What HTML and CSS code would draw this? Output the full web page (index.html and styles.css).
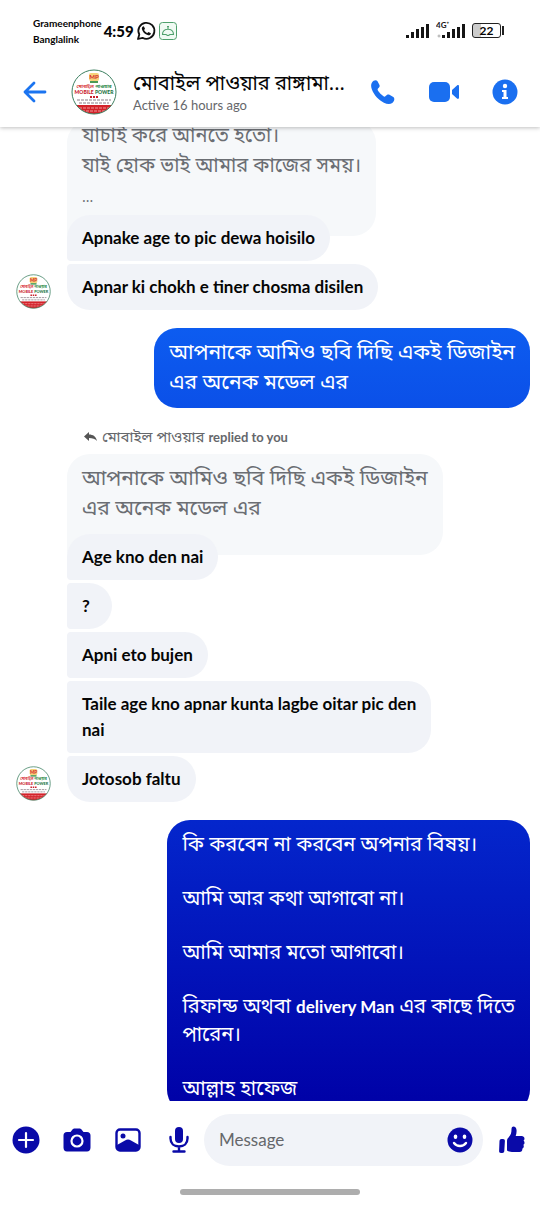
FILE: index.html
```html
<!DOCTYPE html>
<html lang="bn">
<head>
    <meta charset="UTF-8">
    <meta name="viewport" content="width=device-width, initial-scale=1.0">
    <title>Messenger</title>
    <link rel="stylesheet" href="styles.css">
</head>
<body>
    <div class="app">
        <div class="status-bar">
            <div class="carriers">
                <span>Grameenphone</span>
                <span>Banglalink</span>
            </div>
            <span class="clock">4:59</span>
            <svg class="status-icon" viewBox="0 0 20 20" fill="none">
                <path d="M2 18l1.300-4.500A8 8 0 1 1 6.500 16.800z" stroke="#111" stroke-width="1.800" stroke-linejoin="round"/>
                <path d="M6.600 5.700l1.200-.4 1.200 2.500-.9 1.200c.7 1.500 1.700 2.400 3.200 3.100l1.200-1 2.400 1.200c0 1.500-1.400 2.300-2.700 2-3.400-.8-5.700-3.200-6.300-6.200-.2-1 .1-1.900.7-2.400z" fill="#111"/>
            </svg>
            <svg class="status-icon" viewBox="0 0 20 20" fill="none" stroke="#4fa06c">
                <rect x="1.500" y="1.500" width="17" height="17" rx="3" fill="#f0faf3"/>
                <path d="M4.500 13.500c0-7 11-7 11 0M4 13.500h4l1.500 1h1l1.500-1h4M10 8V5.500M9 5.500h2" stroke-width="1.200"/>
            </svg>
            <div class="signals">
                <svg width="24" height="22" viewBox="0 0 24 22" fill="#151515">
                    <path d="M0 15h3v3H0zM5 12h3v6H5zM10 9h3v9h-3zM15 7h3v11h-3zM20 4h3v14h-3z"/>
                </svg>
                <svg width="30" height="22" viewBox="0 0 30 22" fill="#151515">
                    <text x="0" y="8" font-size="8" font-weight="700">4G⁺</text>
                    <circle cx="3" cy="16" r="1" fill="none" stroke="#aaa"/>
                    <path d="M6 15h3v3H6zM11 12h3v6h-3zM16 9h3v9h-3zM21 7h3v11h-3zM26 4h3v14h-3z"/>
                </svg>
                <div class="battery"><span>22</span></div>
            </div>
        </div>

        <header class="chat-header">
            <button type="button" class="icon-btn" aria-label="Back">
                <svg width="24" height="22" viewBox="0 0 24 22" fill="none" stroke="#1b74f0" stroke-width="2.800" stroke-linecap="round" stroke-linejoin="round">
                    <path d="M11 2L2 11l9 9M2 11h20"/>
                </svg>
            </button>
            <svg class="header-avatar" viewBox="0 0 46 46">
                <!-- shop logo, reused next to the messages -->
                <g id="shop-logo">
                    <clipPath id="logo-clip"><circle cx="23" cy="23" r="22"/></clipPath>
                    <circle cx="23" cy="23" r="22" fill="#fff"/>
                    <g clip-path="url(#logo-clip)">
                        <rect x="0" y="36" width="46" height="10" fill="#d3222a"/>
                        <path d="M8 39h30M11 42h24" stroke="#f0989a" stroke-dasharray="3 1"/>
                    </g>
                    <circle cx="23" cy="23" r="22" fill="none" stroke="#3c8060"/>
                    <rect x="18" y="4" width="10" height="8" rx="2" fill="#f6d27a"/>
                    <text x="23" y="10" text-anchor="middle" font-size="6" font-weight="700" fill="#d3222a">MP</text>
                    <path d="M19 13h8" stroke="#4c9a55" stroke-width="2"/>
                    <text x="23" y="19" text-anchor="middle" font-size="5" font-weight="700" fill="#d8383c">মোবাইল <tspan fill="#2f8a4b">পাওয়ার</tspan></text>
                    <text x="23" y="25" text-anchor="middle" font-size="5" font-weight="900" fill="#c8202b">MOBILE <tspan fill="#23733f">POWER</tspan></text>
                    <path d="M19 28h9" stroke="#c8202b" stroke-width="2" stroke-dasharray="2 1"/>
                    <path d="M6 31h34M8 34h30" stroke="#8c7d86" stroke-dasharray="3 1"/>
                </g>
            </svg>
            <div class="contact">
                <h1>মোবাইল পাওয়ার রাঙ্গামা...</h1>
                <p>Active 16 hours ago</p>
            </div>
            <div class="header-actions">
                <button type="button" class="icon-btn" aria-label="Call">
                    <svg width="26" height="26" viewBox="0 0 26 26" fill="#1a6ff0">
                        <path d="M2 3.500C3.500 1 6.300.6 7.500 2.200l2 3.800c.6 1.500-.4 2.500-1.500 3.500-.6.700-.4 1.500.2 2.500 1.300 2 3 3.700 5 5.100 1 .7 1.700.7 2.400 0 1.200-1.400 2.400-2 3.900-1.300l3.800 2.300c1.800 1.400 1.100 4.400-1 5.900-2.300 1.500-5.400 1.200-8.400-.3C8.500 21 4 16 2 10.800 1 8 .7 5.500 2 3.500z"/>
                    </svg>
                </button>
                <button type="button" class="icon-btn" aria-label="Video call">
                    <svg width="30" height="20" viewBox="0 0 30 20" fill="#1a6ff0">
                        <rect x="0" y="0" width="21" height="20" rx="5"/>
                        <path d="M23 8l5-4.500c1-.8 2-.3 2 1v11c0 1.300-1 1.800-2 1L23 12z"/>
                    </svg>
                </button>
                <button type="button" class="icon-btn" aria-label="Details">
                    <svg width="26" height="26" viewBox="0 0 26 26">
                        <circle cx="13" cy="13" r="12.500" fill="#1a6ff0"/>
                        <circle cx="13" cy="7" r="2.200" fill="#fff"/>
                        <path d="M10 11h4.500v7H16v2h-6v-2h1.500v-5H10z" fill="#fff"/>
                    </svg>
                </button>
            </div>
        </header>

        <main class="thread">
            <div class="quote quote-cut">যাচাই করে আনতে হতো।<br>যাই হোক ভাই আমার কাজের সময়।<br><small>...</small></div>
            <div class="bubble received over-quote">Apnake age to pic dewa hoisilo</div>
            <div class="with-avatar">
                <svg class="small-avatar" viewBox="0 0 46 46"><use href="#shop-logo"/></svg>
                <div class="bubble received last">Apnar ki chokh e tiner chosma disilen</div>
            </div>

            <div class="bubble sent">আপনাকে আমিও ছবি দিছি একই ডিজাইন<br>এর অনেক মডেল এর</div>

            <p class="reply-label">
                <svg width="13" height="10" viewBox="0 0 13 10" fill="#555"><path d="M5 0v2.500c4 0 7 2 8 6.500-2-2.300-4.500-3-8-3V9L0 4.500z"/></svg>
                <span>মোবাইল পাওয়ার <b>replied to you</b></span>
            </p>
            <div class="quote">আপনাকে আমিও ছবি দিছি একই ডিজাইন<br>এর অনেক মডেল এর</div>
            <div class="bubble received over-quote">Age kno den nai</div>
            <div class="bubble received">?</div>
            <div class="bubble received">Apni eto bujen</div>
            <div class="bubble received">Taile age kno apnar kunta lagbe oitar pic den<br>nai</div>
            <div class="with-avatar">
                <svg class="small-avatar" viewBox="0 0 46 46"><use href="#shop-logo"/></svg>
                <div class="bubble received last">Jotosob faltu</div>
            </div>

            <div class="bubble sent dark">
                <p>কি করবেন না করবেন অপনার বিষয়।</p>
                <p>আমি আর কথা আগাবো না।</p>
                <p>আমি আমার মতো আগাবো।</p>
                <p>রিফান্ড অথবা <b>delivery Man</b> এর কাছে দিতে<br>পারেন।</p>
                <p>আল্লাহ হাফেজ</p>
            </div>
        </main>

        <form class="composer">
            <button type="button" class="icon-btn" aria-label="More">
                <svg width="28" height="28" viewBox="0 0 28 28">
                    <circle cx="14" cy="14" r="13.500" fill="#0a0aa8"/>
                    <path d="M14 7v14M7 14h14" stroke="#fff" stroke-width="2.200" stroke-linecap="round"/>
                </svg>
            </button>
            <button type="button" class="icon-btn" aria-label="Camera">
                <svg width="28" height="24" viewBox="0 0 28 24">
                    <path d="M4 4h3.500l2-2.500C10 .8 11 .5 12 .5h4c1 0 2 .3 2.500 1l2 2.500H24c2.200 0 3.500 1.500 3.500 3.500v12c0 2.500-1.300 4-3.500 4H4c-2.200 0-3.500-1.500-3.500-4v-12C.5 5.500 1.800 4 4 4z" fill="#0a0aa8"/>
                    <circle cx="14" cy="13" r="5.500" fill="none" stroke="#fff" stroke-width="2.200"/>
                </svg>
            </button>
            <button type="button" class="icon-btn" aria-label="Gallery">
                <svg width="26" height="24" viewBox="0 0 26 24">
                    <rect x="1.500" y="1.500" width="23" height="21" rx="3.500" fill="none" stroke="#0a0aa8" stroke-width="2.400"/>
                    <circle cx="8" cy="8" r="2.500" fill="#0a0aa8"/>
                    <path d="M2 17l8-4.500c2-1.200 4-1.200 6 0l8 4.500v3c0 1.500-1 2.500-2.500 2.500h-17C3 22.500 2 21.500 2 20z" fill="#0a0aa8"/>
                </svg>
            </button>
            <button type="button" class="icon-btn" aria-label="Voice message">
                <svg width="20" height="26" viewBox="0 0 20 26">
                    <rect x="6" y="0" width="8" height="16" rx="4" fill="#0a0aa8"/>
                    <path d="M1.500 10v1.500c0 5 3.500 8 8.500 8s8.500-3 8.500-8V10M10 19.500V24M4.500 24.500h11" fill="none" stroke="#0a0aa8" stroke-width="2.400" stroke-linecap="round"/>
                </svg>
            </button>
            <div class="message-box">
                <input type="text" aria-label="Message" placeholder="Message">
                <button type="button" class="icon-btn" aria-label="Emoji">
                    <svg width="26" height="26" viewBox="0 0 26 26">
                        <circle cx="13" cy="13" r="12.500" fill="#0a0aa8"/>
                        <ellipse cx="8.500" cy="9.800" rx="1.800" ry="2.300" fill="#fff"/>
                        <ellipse cx="17.500" cy="9.800" rx="1.800" ry="2.300" fill="#fff"/>
                        <path d="M7 16c3 4 9 4 12 0" fill="none" stroke="#fff" stroke-width="2.400" stroke-linecap="round"/>
                    </svg>
                </button>
            </div>
            <button type="button" class="icon-btn" aria-label="Like">
                <svg width="26" height="28" viewBox="0 0 26 28" fill="#0a0aa8">
                    <path d="M2.500 13H4c1.200 0 2 .8 1.900 2l-.6 10c-.1 1.300-.8 2-2 2H2c-1.300 0-2-.8-1.900-2l.4-10c.1-1.200.8-2 2-2z"/>
                    <path d="M8 15c0-1.500.5-2.500 1.500-3.500 2.500-2.500 3-5 3-8.500 0-3.500 4.500-3.300 5 .8.300 2.200-.2 4.200-.8 6.200H23c3 .5 3 3.800 1.500 4.500 1.500 1.200 1.300 3.500-.2 4.300 1 1.400.4 3.300-1 3.900.3 1.700-.6 3.300-2.800 3.300h-6c-2.500 0-5-.5-6.500-1.500z"/>
                </svg>
            </button>
        </form>
        <div class="gesture-bar"></div>
    </div>
</body>
</html>
```

FILE: styles.css
```css
* {
    box-sizing: border-box;
}
body {
    margin: 0;
    background: #fff;
    font-family: 'Lato', 'Noto Sans Bengali', 'Noto Sans', sans-serif;
    color: #050505;
}
h1, p {
    margin: 0;
}
svg {
    display: block;
    flex-shrink: 0;
}
b {
    font-family: 'Lato', sans-serif;
}
.app {
    display: flex;
    flex-direction: column;
    height: 100vh;
}
.icon-btn {
    padding: 0;
    border: none;
    background: none;
    cursor: pointer;
}

/* status bar */
.status-bar {
    display: flex;
    align-items: center;
    gap: 2px;
    height: 57px;
    padding: 4px 39px 0 33px;
}
.carriers {
    display: flex;
    flex-direction: column;
    font-size: 10px;
    line-height: 16px;
    font-weight: 700;
}
.clock {
    font-size: 15px;
    font-weight: 900;
}
.status-icon {
    width: 20px;
    height: 20px;
}
.signals {
    display: flex;
    align-items: center;
    gap: 6px;
    margin-left: auto;
}
.battery {
    position: relative;
    width: 29px;
    height: 15px;
    border: 1px solid #222;
    border-radius: 3px;
    background: linear-gradient(90deg, #ccc 28%, #fff 28%);
    font-size: 12px;
    line-height: 13px;
    font-weight: 700;
    text-align: center;
}
.battery::after {
    content: "";
    position: absolute;
    top: 2px;
    right: -4px;
    width: 2px;
    height: 9px;
    background: #222;
}

/* chat header */
.chat-header {
    display: flex;
    align-items: center;
    height: 70px;
    padding: 0 22px 0 23px;
    background: #fff;
    box-shadow: 0 1px 4px rgba(0, 0, 0, 0.25);
    clip-path: inset(0 0 -8px 0);
    z-index: 1;
}
.header-avatar {
    width: 46px;
    height: 46px;
    margin: 0 16px 0 24px;
}
.contact h1 {
    font-family: 'Noto Sans', 'Noto Sans Bengali', sans-serif;
    font-size: 20px;
    line-height: 26px;
    font-weight: 400;
    white-space: nowrap;
}
.contact p {
    font-size: 13px;
    line-height: 18px;
    color: #65676b;
}
.header-actions {
    display: flex;
    align-items: center;
    gap: 33px;
    margin-left: auto;
}

/* messages */
.thread {
    flex: 1;
    min-height: 0;
    display: flex;
    flex-direction: column;
    align-items: flex-start;
    gap: 3px;
    padding: 0 10px 0 67px;
    overflow: hidden;
}
.bubble {
    flex-shrink: 0;
    max-width: 380px;
    padding: 10px 15px;
    font-size: 17px;
    line-height: 26px;
}
.received {
    min-width: 45px;
    border-radius: 4px 23px 23px 4px;
    background: #f1f3f8;
    font-weight: 700;
}
.received.last {
    border-bottom-left-radius: 23px;
}
.over-quote {
    margin-top: -24px;
    border-top-left-radius: 23px;
}
.quote, .sent {
    font-family: 'Noto Sans', 'Noto Sans Bengali', sans-serif;
    font-size: 21px;
    line-height: 30px;
}
.quote {
    flex-shrink: 0;
    padding: 8px 15px 33px;
    border-radius: 23px 23px 23px 4px;
    background: #f6f8fa;
    color: #6b6e73;
}
.quote-cut {
    margin-top: -7px;
    padding-top: 0;
    padding-bottom: 24px;
    font-size: 20px;
}
.quote small {
    font-size: 14px;
}
.with-avatar {
    display: flex;
    align-items: center;
    gap: 16px;
    margin-left: -51px;
}
.small-avatar {
    width: 35px;
    height: 35px;
    margin-top: 8px;
}
.sent {
    align-self: flex-end;
    margin-top: 15px;
    padding: 8px 15px 12px;
    border-radius: 23px;
    background: linear-gradient(#0d5cf0, #0b50e8);
    color: #fff;
}
.sent.dark {
    padding-top: 10px;
    background: linear-gradient(#0426cc, #0000a6);
    font-size: 20px;
    line-height: 27px;
}
.dark p + p {
    margin-top: 27px;
}
.dark b {
    font-size: 17px;
}
.reply-label {
    display: flex;
    align-items: center;
    gap: 5px;
    margin: 14px 0 3px 17px;
    font-family: 'Noto Sans', 'Noto Sans Bengali', sans-serif;
    font-size: 15px;
    line-height: 22px;
    color: #65676b;
}
.reply-label b {
    font-size: 13px;
}

/* composer */
.composer {
    display: grid;
    grid-template-columns: repeat(4, 51px) 1fr 57px;
    align-items: center;
    height: 77px;
    background: #fff;
}
.composer .icon-btn {
    justify-self: center;
}
.message-box {
    display: flex;
    align-items: center;
    height: 52px;
    padding: 0 10px 0 15px;
    border-radius: 26px;
    background: #f1f3f8;
}
.message-box input {
    flex: 1;
    min-width: 0;
    padding: 0;
    border: none;
    outline: none;
    background: none;
    font: inherit;
    font-size: 17px;
}
.message-box input::placeholder {
    color: #65676b;
}
.gesture-bar {
    width: 180px;
    height: 6px;
    margin: 11px auto;
    border-radius: 3px;
    background: #adadad;
}
```
